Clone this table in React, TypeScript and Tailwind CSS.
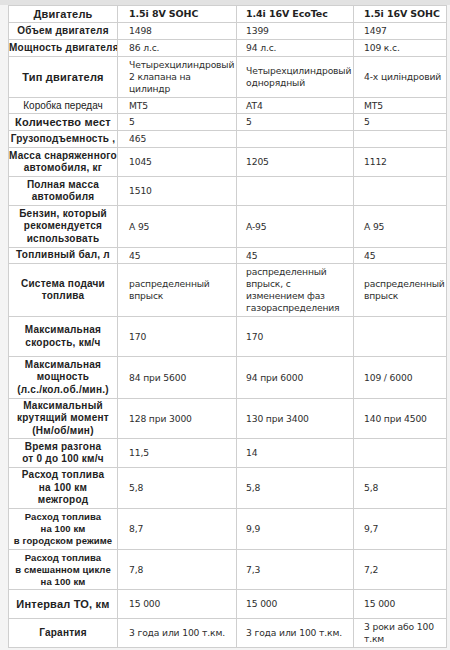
type Row = {
  label: string[];
  values: (string | string[])[];
  h: number;
  weight?: 'bold' | 'normal';
  size?: 'sm' | 'md' | 'lg';
};

const ROWS: Row[] = [
  { label: ['Объем двигателя'], values: ['1498', '1399', '1497'], h: 17 },
  { label: ['Мощность двигателя'], values: ['86 л.с.', '94 л.с.', '109 к.с.'], h: 17 },
  {
    label: ['Тип двигателя'],
    values: [['Четырехцилиндровый', '2 клапана на', 'цилиндр'], ['Четырехцилиндровый', 'однорядный'], ['4-х циліндровий']],
    h: 41,
    size: 'lg',
  },
  { label: ['Коробка передач'], values: ['MT5', 'AT4', 'MT5'], h: 16, weight: 'normal' },
  { label: ['Количество мест'], values: ['5', '5', '5'], h: 17, size: 'lg' },
  { label: ['Грузоподъемность ,'], values: ['465', '', ''], h: 17 },
  { label: ['Масса снаряженного', 'автомобиля, кг'], values: ['1045', '1205', '1112'], h: 29 },
  { label: ['Полная масса', 'автомобиля'], values: ['1510', '', ''], h: 29 },
  { label: ['Бензин, который', 'рекомендуется', 'использовать'], values: ['A 95', 'A-95', 'A 95'], h: 42 },
  { label: ['Топливный бал, л'], values: ['45', '45', '45'], h: 16 },
  {
    label: ['Система подачи', 'топлива'],
    values: [['распределенный', 'впрыск'], ['распределенный', 'впрыск, с', 'изменением фаз', 'газораспределения'], ['распределенный', 'впрыск']],
    h: 53,
  },
  { label: ['Максимальная', 'скорость, км/ч'], values: ['170', '170', ''], h: 40 },
  { label: ['Максимальная', 'мощность', '(л.с./кол.об./мин.)'], values: ['84 при 5600', '94 при 6000', '109 / 6000'], h: 42 },
  { label: ['Максимальный', 'крутящий момент', '(Нм/об/мин)'], values: ['128 при 3000', '130 при 3400', '140 при 4500'], h: 40 },
  { label: ['Время разгона', 'от 0 до 100 км/ч'], values: ['11,5', '14', ''], h: 29 },
  { label: ['Расход топлива', 'на 100 км', 'межгород'], values: ['5,8', '5,8', '5,8'], h: 41 },
  { label: ['Расход топлива', 'на 100 км', 'в городском режиме'], values: ['8,7', '9,9', '9,7'], h: 41, size: 'sm' },
  { label: ['Расход топлива', 'в смешанном цикле', 'на 100 км'], values: ['7,8', '7,3', '7,2'], h: 40, size: 'sm' },
  { label: ['Интервал ТО, км'], values: ['15 000', '15 000', '15 000'], h: 29, size: 'lg' },
  { label: ['Гарантия'], values: ['3 года или 100 т.км.', '3 года или 100 т.км.', ['3 роки або 100', 'т.км']], h: 29 },
];

const heightClass: Record<number, string> = {
  16: 'h-[16px]',
  17: 'h-[17px]',
  29: 'h-[29px]',
  40: 'h-[40px]',
  41: 'h-[41px]',
  42: 'h-[42px]',
  53: 'h-[53px]',
};

const labelSize = {
  sm: 'text-[9.5px] leading-[12px] tracking-[0.1px]',
  md: 'text-[10px] leading-[12.5px] tracking-[0.25px]',
  lg: 'text-[11px] leading-[13px] tracking-[0.2px]',
};

// per-column left padding, matching where the text starts in each column
const padClass = ['pl-[11px]', 'pl-[9px]', 'pl-[10px]'];

function Lines({ v }: { v: string | string[] }) {
  const lines = Array.isArray(v) ? v : [v];
  return (
    <>
      {lines.map((l, i) => (
        <div key={i}>{l}</div>
      ))}
    </>
  );
}

export default function App() {
  return (
    <div className="w-[450px] h-[650px] bg-[#f4f4f4] overflow-hidden text-[#222]">
      {/* top strip */}
      <div className="h-[5px] bg-[#e2e2e2]" />
      <div className="pl-[8px]">
        <table className="border-collapse table-fixed w-[438px] bg-white [font-family:'DejaVu_Sans',Verdana,sans-serif]">
          <colgroup>
            <col className="w-[109px]" />
            <col className="w-[119px]" />
            <col className="w-[117px]" />
            <col className="w-[93px]" />
          </colgroup>
          <thead>
            <tr className="h-[17px]">
              <th className="border border-[#cfcfcf] text-center align-middle p-0 text-[11px] leading-[13px] tracking-[0.2px] font-bold [font-family:'Liberation_Sans',Arial,sans-serif]">
                Двигатель
              </th>
              {['1.5i 8V SOHC', '1.4i 16V EcoTec', '1.5i 16V SOHC'].map((t, j) => (
                <th key={t} className={`border border-[#cfcfcf] text-left align-middle ${padClass[j]} pr-0 py-0 text-[9.5px] leading-[12px] tracking-[-0.1px] font-bold whitespace-nowrap overflow-hidden`}>
                  {t}
                </th>
              ))}
            </tr>
          </thead>
          <tbody>
            {ROWS.map((r, i) => (
              <tr key={i} className={heightClass[r.h]}>
                <td
                  className={`border border-[#cfcfcf] text-center align-middle p-0 whitespace-nowrap overflow-hidden [font-family:'Liberation_Sans',Arial,sans-serif] ${
                    r.weight === 'normal' ? 'font-normal' : 'font-bold'
                  } ${r.weight === 'normal' ? 'text-[10px] leading-[12px]' : labelSize[r.size ?? 'md']}`}
                >
                  <Lines v={r.label} />
                </td>
                {r.values.map((v, j) => (
                  <td
                    key={j}
                    className={`border border-[#cfcfcf] text-left align-middle ${padClass[j]} pr-0 py-0 text-[9.2px] leading-[12px] tracking-[-0.15px] text-[#2e2e2e] whitespace-nowrap overflow-hidden`}
                  >
                    <Lines v={v} />
                  </td>
                ))}
              </tr>
            ))}
          </tbody>
        </table>
      </div>
    </div>
  );
}
